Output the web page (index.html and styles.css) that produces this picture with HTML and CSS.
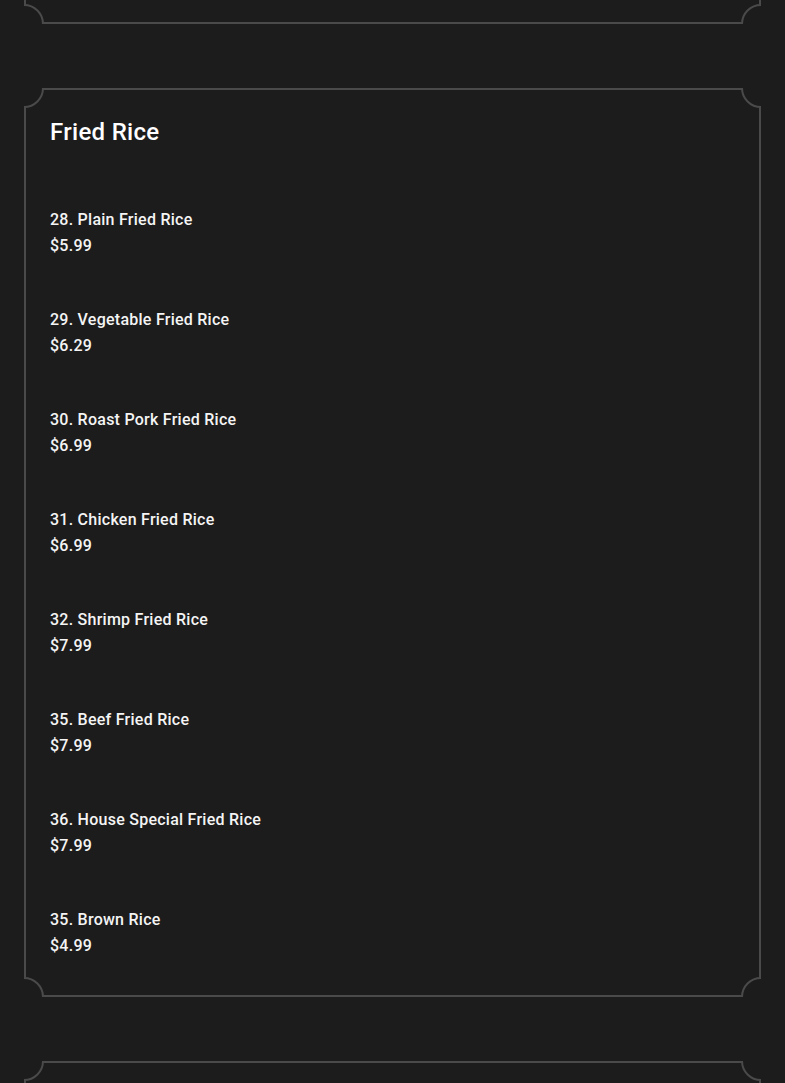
FILE: index.html
```html
<!DOCTYPE html>
<html lang="en">
<head>
<meta charset="utf-8">
<title>Menu - Fried Rice</title>
<link rel="stylesheet" href="styles.css">
</head>
<body>
<main class="menu">
  <section class="card card--prev">
    <span class="corner corner--tl"></span><span class="corner corner--tr"></span>
    <span class="corner corner--bl"></span><span class="corner corner--br"></span>
  </section>

  <section class="card">
    <span class="corner corner--tl"></span><span class="corner corner--tr"></span>
    <span class="corner corner--bl"></span><span class="corner corner--br"></span>
    <h2 class="card__title">Fried Rice</h2>
    <ul class="items">
      <li class="item"><div class="item__name">28. Plain Fried Rice</div><div class="item__price">$5.99</div></li>
      <li class="item"><div class="item__name">29. Vegetable Fried Rice</div><div class="item__price">$6.29</div></li>
      <li class="item"><div class="item__name">30. Roast Pork Fried Rice</div><div class="item__price">$6.99</div></li>
      <li class="item"><div class="item__name">31. Chicken Fried Rice</div><div class="item__price">$6.99</div></li>
      <li class="item"><div class="item__name">32. Shrimp Fried Rice</div><div class="item__price">$7.99</div></li>
      <li class="item"><div class="item__name">35. Beef Fried Rice</div><div class="item__price">$7.99</div></li>
      <li class="item"><div class="item__name">36. House Special Fried Rice</div><div class="item__price">$7.99</div></li>
      <li class="item"><div class="item__name">35. Brown Rice</div><div class="item__price">$4.99</div></li>
    </ul>
  </section>

  <section class="card card--next">
    <span class="corner corner--tl"></span><span class="corner corner--tr"></span>
    <span class="corner corner--bl"></span><span class="corner corner--br"></span>
  </section>
</main>
</body>
</html>
```

FILE: styles.css
```css
html {
  overflow: hidden;
}
body {
  margin: 0;
  background: #1c1c1c;
  color: #f4f4f4;
  font-family: Roboto, "Liberation Sans", sans-serif;
}
.menu {
  padding: 0 24px;
  display: flex;
  flex-direction: column;
  gap: 64px;
}
.card {
  position: relative;
  border: 2px solid #4a4a4a;
  background: #1c1c1c;
  padding: 26px 24px 37px;
}
.card--prev {
  margin-top: -76px;
  height: 100px;
  box-sizing: border-box;
}
.card--next {
  min-height: 300px;
}
.corner {
  position: absolute;
  width: 40px;
  height: 40px;
  box-sizing: border-box;
  border: 2px solid #4a4a4a;
  border-radius: 50%;
  background: #1c1c1c;
}
.corner--tl { top: -22px; left: -22px; clip-path: inset(50% 0 0 50%); }
.corner--tr { top: -22px; right: -22px; clip-path: inset(50% 50% 0 0); }
.corner--bl { bottom: -22px; left: -22px; clip-path: inset(0 0 50% 50%); }
.corner--br { bottom: -22px; right: -22px; clip-path: inset(0 50% 50% 0); }

.card__title {
  margin: 0;
  font-size: 24px;
  line-height: 32px;
  font-weight: 500;
  letter-spacing: 0.3px;
  color: #ffffff;
}
.items {
  list-style: none;
  margin: 0;
  padding: 60px 0 0;
  display: flex;
  flex-direction: column;
  gap: 50px;
}
.item__name {
  font-size: 16px;
  line-height: 24px;
  font-weight: 500;
  letter-spacing: 0.25px;
}
.item__price {
  margin-top: 2px;
  font-size: 16px;
  line-height: 24px;
  font-weight: 500;
  letter-spacing: 0.25px;
}
```
